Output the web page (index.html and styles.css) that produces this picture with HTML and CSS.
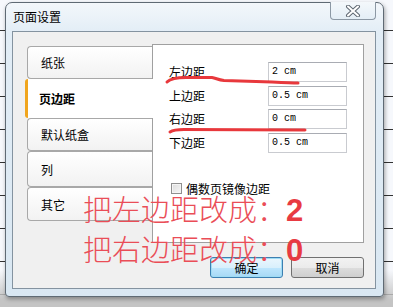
FILE: index.html
```html
<!DOCTYPE html>
<html lang="zh">
<head>
<meta charset="utf-8">
<title>页面设置</title>
<link rel="stylesheet" href="styles.css">
</head>
<body>
<div class="screen">
  <div class="window">
    <div class="titlebar">
      <span class="title">页面设置</span>
      <div class="close">
        <svg width="16" height="12" viewBox="0 0 16 12">
          <path d="M3 1.5 L13 10.5 M13 1.5 L3 10.5" stroke="#5d6670" stroke-width="4" stroke-linecap="round" fill="none"/>
          <path d="M3 1.5 L13 10.5 M13 1.5 L3 10.5" stroke="#ffffff" stroke-width="2" stroke-linecap="round" fill="none"/>
        </svg>
      </div>
    </div>
    <div class="client">
      <div class="main">
        <div class="tabs">
          <div class="tab t1">纸张</div>
          <div class="tab active">页边距</div>
          <div class="tab t3">默认纸盒</div>
          <div class="tab t4">列</div>
          <div class="tab t5">其它</div>
        </div>
        <div class="panel">
          <div class="fields">
            <span class="lbl">左边距</span><div class="input">2 cm</div>
            <span class="lbl">上边距</span><div class="input">0.5 cm</div>
            <span class="lbl">右边距</span><div class="input">0 cm</div>
            <span class="lbl">下边距</span><div class="input">0.5 cm</div>
          </div>
          <div class="check"><span class="box"></span><span>偶数页镜像边距</span></div>
        </div>
      </div>
      <div class="buttons">
        <div class="btn default">确定</div>
        <div class="btn">取消</div>
      </div>
    </div>
  </div>
  <svg class="marks" width="393" height="307" viewBox="0 0 393 307">
    <path d="M167 82 C170 79, 176 77.5, 186 77.5 L212 77.5 C216 78, 218 80, 224 80.5 L272 82 C282 82.5, 292 83, 298 83" stroke="#e8383c" stroke-width="3" fill="none" stroke-linecap="round"/>
    <path d="M170 132 C173 130, 177 129.5, 184 129.5 L305 130" stroke="#e8383c" stroke-width="3" fill="none" stroke-linecap="round"/>
  </svg>
  <div class="note">
    <div class="line">把左边距改成：<b>2</b></div>
    <div class="line">把右边距改成：<b>0</b></div>
  </div>
</div>
</body>
</html>
```

FILE: styles.css
```css
* { box-sizing: border-box; }
html, body { margin: 0; padding: 0; }
body {
  width: 393px;
  height: 307px;
  overflow: hidden;
  font-family: "Noto Sans CJK SC", "Liberation Sans", sans-serif;
  font-size: 12px;
  color: #000;
}
.screen {
  position: relative;
  width: 393px;
  height: 307px;
  padding: 2px 9px 10px 5px;
  background:
    linear-gradient(to bottom, rgba(255,255,255,0) 0 270px, #c4c4c4 300px),
    repeating-linear-gradient(to bottom, #f6f8fc 0 30px, #333 30px 31px, #f6f8fc 31px 33px),
    #f6f8fc;
}
.window {
  width: 379px;
  height: 295px;
  border: 1px solid #5f6a74;
  border-radius: 7px 7px 4px 4px;
  background: linear-gradient(to bottom, #f3f7fb 0, #e2edf6 30px, #d9e7f2 100%);
  box-shadow: 1px 2px 4px rgba(0,0,0,0.35);
  display: flex;
  flex-direction: column;
}
.titlebar {
  height: 28px;
  display: flex;
  justify-content: space-between;
  align-items: flex-start;
  padding: 0 7px 0 7px;
}
.title {
  font-size: 12px;
  line-height: 14px;
  margin-top: 7px;
  color: #000;
}
.close {
  width: 46px;
  height: 18px;
  margin-top: -1px;
  border: 1px solid #8c98a4;
  border-top: none;
  border-radius: 0 0 4px 4px;
  background: linear-gradient(to bottom, #f4f8fb, #e4eef6);
  display: flex;
  justify-content: center;
  align-items: center;
}
.client {
  margin: 0 7px 0 6px;
  height: 258px;
  border: 1px solid #8493a0;
  background: #f0f0f0;
  padding: 12px 11px 10px 14px;
  display: flex;
  flex-direction: column;
}
.main {
  display: flex;
  height: 199px;
}
.tabs {
  width: 125px;
  padding-top: 2px;
  display: flex;
  flex-direction: column;
  position: relative;
  z-index: 1;
}
.tab {
  border: 1px solid #a8a8a8;
  border-right: none;
  border-radius: 4px 0 0 4px;
  background: linear-gradient(to bottom, #ffffff, #f2f2f2);
  padding-left: 13px;
  display: flex;
  align-items: center;
  font-size: 12px;
}
.t1 { height: 33px; }
.active {
  height: 39px;
  margin-left: -2px;
  margin-right: -1px;
  border: none;
  border-left: 3px solid #f0a51e;
  border-radius: 3px 0 0 3px;
  background: #ffffff;
  padding-left: 11px;
  font-weight: bold;
}
.t3 { height: 33px; }
.t4 { height: 36px; }
.t5 { height: 34px; }
.panel {
  width: 212px;
  height: 199px;
  border: 1px solid #a0a0a0;
  background: #ffffff;
  padding: 17px 0 0 16px;
}
.fields {
  display: grid;
  grid-template-columns: 99px 79px;
  grid-auto-rows: 20px;
  row-gap: 3.67px;
  align-items: center;
}
.lbl {
  font-size: 12px;
  line-height: 14px;
}
.input {
  height: 20px;
  border: 1px solid #c9cbd0;
  border-top-color: #a9acb3;
  background: #fff;
  font-family: "Liberation Mono", "DejaVu Sans Mono", monospace;
  font-size: 10px;
  line-height: 18px;
  padding-left: 3px;
  white-space: pre;
}
.check {
  margin-top: 30px;
  display: flex;
  align-items: center;
  gap: 4px;
  padding-left: 2px;
  font-size: 12px;
  line-height: 12px;
}
.box {
  width: 11px;
  height: 11px;
  border: 1px solid #8f8f8f;
  background: linear-gradient(135deg, #dcdcdc, #f7f7f7);
  box-shadow: inset 0 0 0 1px #f4f4f4;
}
.buttons {
  margin-top: 14px;
  display: flex;
  justify-content: flex-end;
  gap: 8px;
}
.btn {
  width: 73px;
  height: 21px;
  border: 1px solid #707070;
  border-radius: 3px;
  background: linear-gradient(to bottom, #f2f2f2 0, #ebebeb 50%, #dddddd 51%, #cfcfcf 100%);
  display: flex;
  justify-content: center;
  align-items: center;
  font-size: 12px;
  line-height: 14px;
}
.default {
  border-color: #3c7fb1;
  box-shadow: inset 0 0 0 1px #9fdcf4;
  background: linear-gradient(to bottom, #eaf6fd 0, #d9f0fc 50%, #bee6fd 51%, #a7d9f5 100%);
}
.marks {
  position: absolute;
  left: 0;
  top: 0;
  pointer-events: none;
  z-index: 3;
}
.note {
  position: absolute;
  left: 83px;
  top: 195px;
  z-index: 4;
  display: flex;
  flex-direction: column;
  gap: 11px;
  color: #ea4d57;
  font-family: "Noto Sans CJK SC", "Liberation Sans", sans-serif;
  font-weight: 300;
  font-size: 29px;
  line-height: 26px;
  pointer-events: none;
  white-space: nowrap;
}
.note b {
  font-family: "Liberation Sans", "Noto Sans", sans-serif;
  font-weight: bold;
  font-size: 31px;
  color: #e83a42;
}
```
